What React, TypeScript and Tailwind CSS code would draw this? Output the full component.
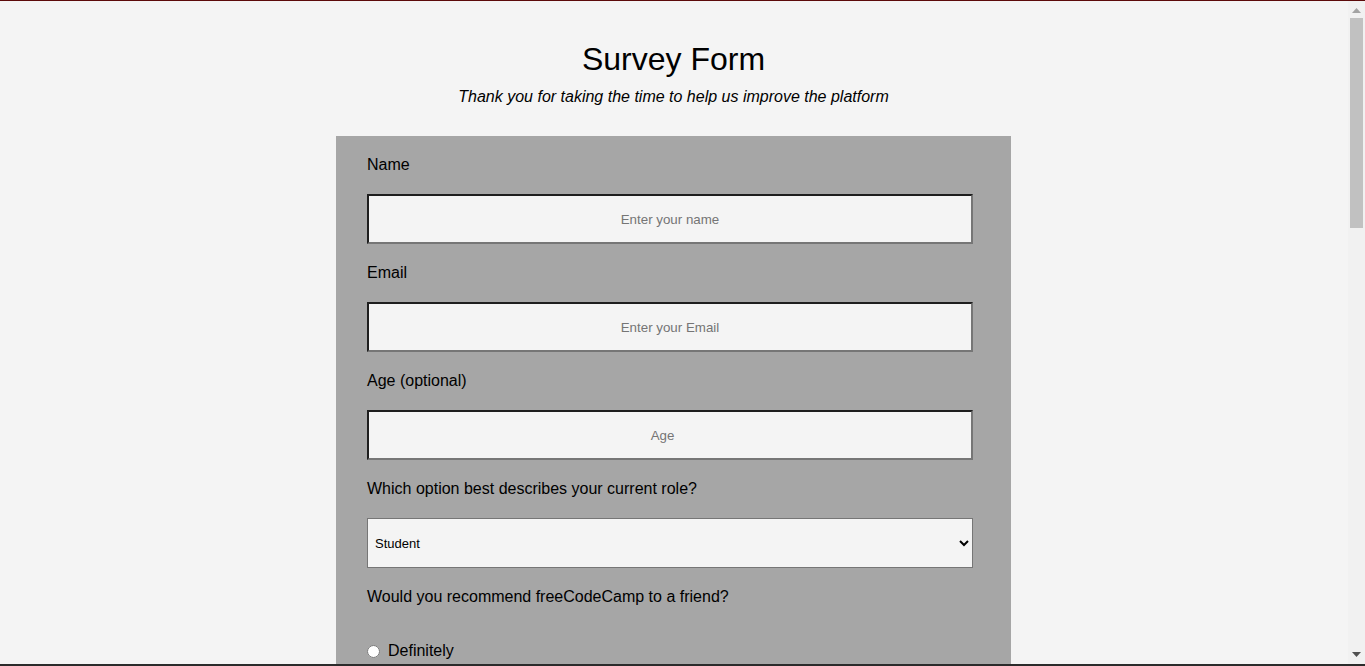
const inputCls =
  "block h-[50px] w-[606px] border-2 border-t-[#1e1e1e] border-l-[#1e1e1e] border-r-[#767676] border-b-[#767676] bg-[#f4f4f4] text-center text-[13.33px] text-black placeholder:text-[#757575] outline-none";

function Field({ label, children }: { label: string; children: React.ReactNode }) {
  return (
    <div className="flex flex-col gap-[20px]">
      <label className="text-[16px] leading-[18px] text-black">{label}</label>
      {children}
    </div>
  );
}

function Radio({ name, label }: { name: string; label: string }) {
  return (
    <label className="flex items-center gap-[8px] text-[16px] leading-[18px] text-black">
      <input type="radio" name={name} className="m-0 h-[13px] w-[13px]" />
      {label}
    </label>
  );
}

// fake window scrollbar (the page is taller than the viewport)
function ScrollBar() {
  return (
    <div className="fixed top-px right-0 bottom-0 flex w-[17px] flex-col items-center bg-[#f1f1f1]">
      <svg width="9" height="5" viewBox="0 0 9 5" className="mt-[7px]">
        <path d="M4.5 0 L9 5 L0 5 Z" fill="#a3a3a3" />
      </svg>
      <div className="mt-[5px] h-[210px] w-[13px] bg-[#c1c1c1]" />
      <svg width="9" height="5" viewBox="0 0 9 5" className="mt-auto mb-[9px]">
        <path d="M0 0 L9 0 L4.5 5 Z" fill="#505050" />
      </svg>
    </div>
  );
}

export default function App() {
  return (
    <div className="min-h-screen border-t border-[#5c0a0a] bg-[#f4f4f4] pr-[18px] font-['Liberation_Sans',Arial,sans-serif] text-black">
      <header className="flex flex-col items-center pt-[40px]">
        <h1 className="text-[32px] leading-[37px] font-normal">Survey Form</h1>
        <p className="mt-[10px] text-[16px] leading-[18px] italic">
          Thank you for taking the time to help us improve the platform
        </p>
      </header>

      <form className="mx-auto mt-[30px] flex w-[675px] flex-col gap-[20px] bg-[#a6a6a6] px-[31px] pt-[20px] pb-[40px]">
        <Field label="Name">
          <input type="text" placeholder="Enter your name" className={inputCls} />
        </Field>
        <Field label="Email">
          <input type="email" placeholder="Enter your Email" className={inputCls} />
        </Field>
        <Field label="Age (optional)">
          <input type="number" placeholder="Age" className={inputCls} />
        </Field>
        <Field label="Which option best describes your current role?">
          <select className="block h-[50px] w-[606px] border border-[#767676] bg-[#f4f4f4] pl-[3px] text-[13px] text-black outline-none">
            <option>Student</option>
            <option>Full Time Job</option>
            <option>Full Time Learner</option>
            <option>Prefer not to say</option>
            <option>Other</option>
          </select>
        </Field>

        <div className="flex flex-col">
          <p className="text-[16px] leading-[18px]">Would you recommend freeCodeCamp to a friend?</p>
          <div className="mt-[36px] flex flex-col gap-[12px]">
            <Radio name="recommend" label="Definitely" />
            <Radio name="recommend" label="Maybe" />
            <Radio name="recommend" label="Not sure" />
          </div>
        </div>

        <Field label="What is your favorite feature of freeCodeCamp?">
          <select className="block h-[50px] w-[606px] border border-[#767676] bg-[#f4f4f4] pl-[3px] text-[13px] text-black outline-none">
            <option>Select an option</option>
            <option>Challenges</option>
            <option>Projects</option>
            <option>Community</option>
            <option>Open Source</option>
          </select>
        </Field>

        <div className="flex flex-col gap-[12px]">
          <p className="text-[16px] leading-[18px]">What would you like to see improved? (Check all that apply)</p>
          {["Front-end Projects", "Back-end Projects", "Data Visualization", "Challenges", "Open Source Community", "Gitter help rooms", "Videos", "City Meetups", "Wiki", "Forum", "Additional Courses"].map((t) => (
            <label key={t} className="flex items-center gap-[8px] text-[16px] leading-[18px]">
              <input type="checkbox" className="m-0 h-[13px] w-[13px]" />
              {t}
            </label>
          ))}
        </div>

        <Field label="Any comments or suggestions?">
          <textarea
            placeholder="Enter your comment here..."
            className="block h-[120px] w-[606px] border border-[#767676] bg-[#f4f4f4] p-[4px] text-[13px] outline-none"
          />
        </Field>

        <button type="submit" className="h-[44px] w-[606px] border border-[#767676] bg-[#f4f4f4] text-[16px]">
          Submit
        </button>
      </form>
      <div className="h-[40px]" />
      <ScrollBar />
      <div className="fixed inset-x-0 bottom-0 h-[2px] bg-[#2b2b2b]" />
    </div>
  );
}
